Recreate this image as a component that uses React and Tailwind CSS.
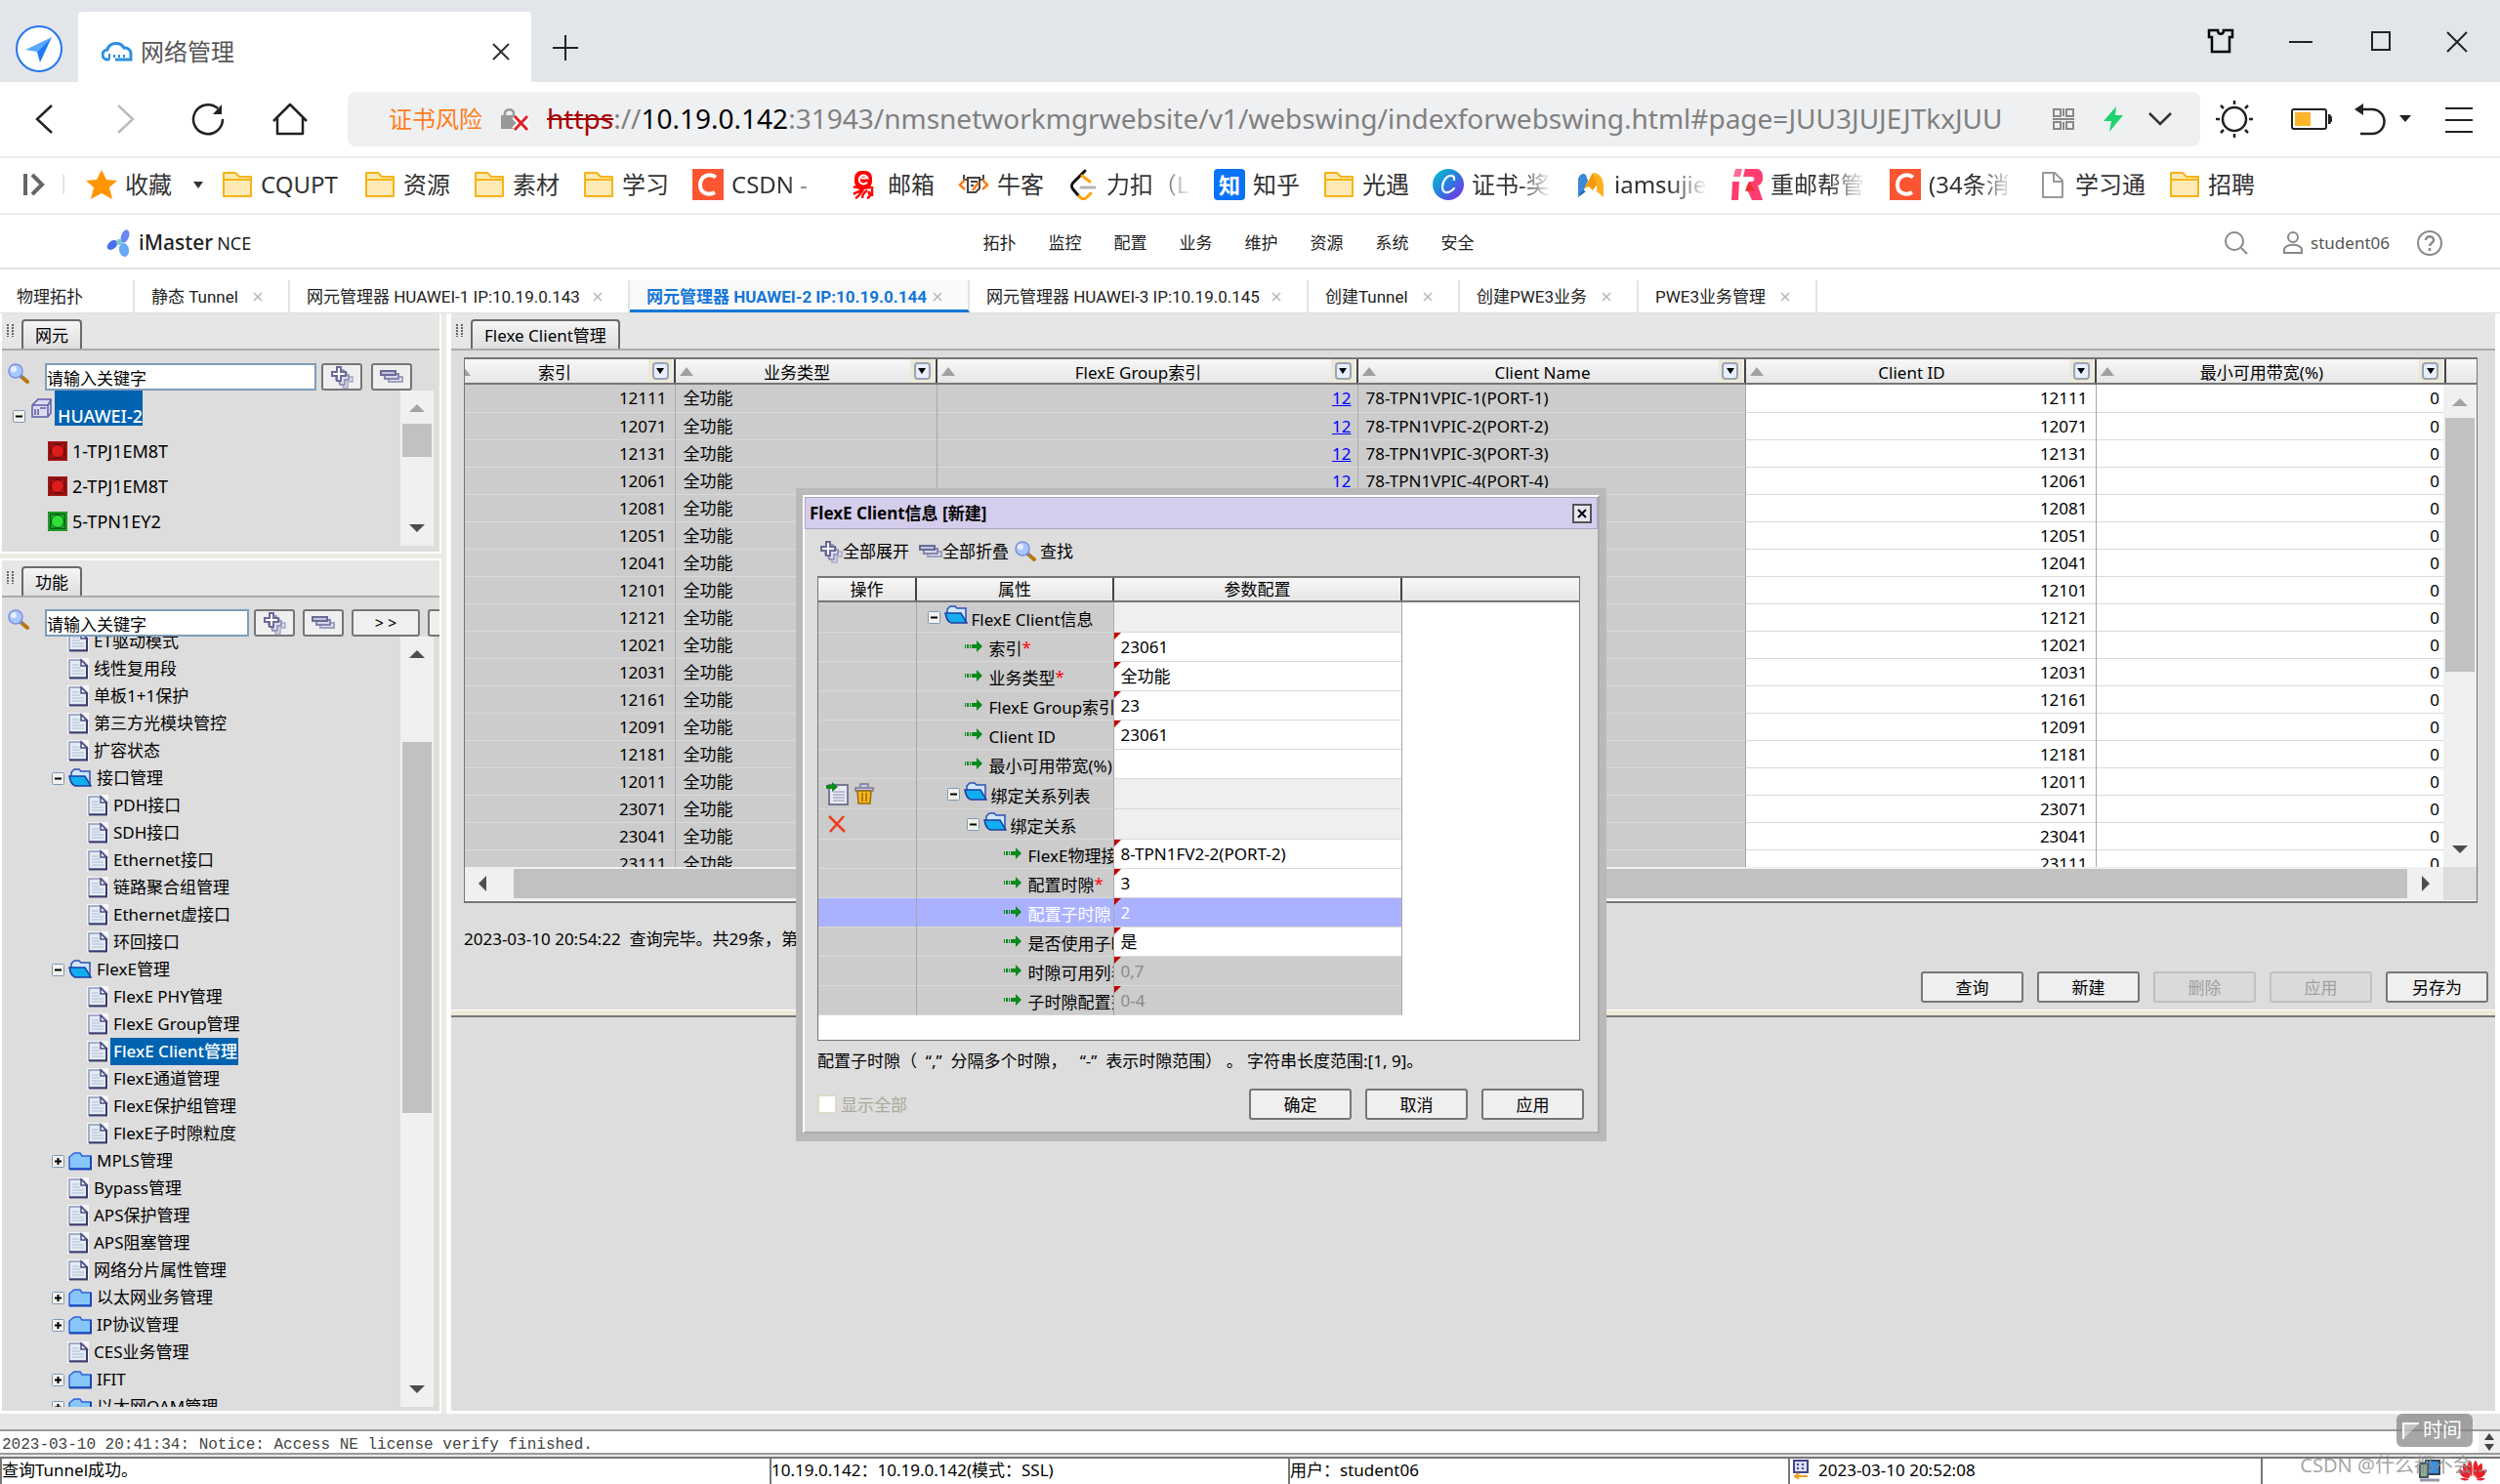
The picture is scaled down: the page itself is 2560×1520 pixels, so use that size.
import React, { useState } from "react";

/* ---------- data ---------- */

const menus = ["拓扑", "监控", "配置", "业务", "维护", "资源", "系统", "安全"];

const pageTabs = [
  { label: "物理拓扑", width: "w-[138px]", closable: false },
  { label: "静态 Tunnel", width: "w-[159px]", closable: true },
  { label: "网元管理器 HUAWEI-1 IP:10.19.0.143", width: "w-[348px]", closable: true },
  { label: "网元管理器 HUAWEI-2 IP:10.19.0.144", width: "w-[348px]", closable: true },
  { label: "网元管理器 HUAWEI-3 IP:10.19.0.145", width: "w-[347px]", closable: true },
  { label: "创建Tunnel", width: "w-[155px]", closable: true },
  { label: "创建PWE3业务", width: "w-[183px]", closable: true },
  { label: "PWE3业务管理", width: "w-[183px]", closable: true },
];

const boards = [
  { name: "1-TPJ1EM8T", color: "#e01b1b", dark: "#6b0f0f" },
  { name: "2-TPJ1EM8T", color: "#e01b1b", dark: "#6b0f0f" },
  { name: "5-TPN1EY2", color: "#2fe03a", dark: "#0d5c14" },
];

const functions = [
  { name: "ET驱动模式", type: "doc", level: 1 },
  { name: "线性复用段", type: "doc", level: 1 },
  { name: "单板1+1保护", type: "doc", level: 1 },
  { name: "第三方光模块管控", type: "doc", level: 1 },
  { name: "扩容状态", type: "doc", level: 1 },
  { name: "接口管理", type: "open" },
  { name: "PDH接口", type: "doc", level: 2 },
  { name: "SDH接口", type: "doc", level: 2 },
  { name: "Ethernet接口", type: "doc", level: 2 },
  { name: "链路聚合组管理", type: "doc", level: 2 },
  { name: "Ethernet虚接口", type: "doc", level: 2 },
  { name: "环回接口", type: "doc", level: 2 },
  { name: "FlexE管理", type: "open" },
  { name: "FlexE PHY管理", type: "doc", level: 2 },
  { name: "FlexE Group管理", type: "doc", level: 2 },
  { name: "FlexE Client管理", type: "doc", level: 2 },
  { name: "FlexE通道管理", type: "doc", level: 2 },
  { name: "FlexE保护组管理", type: "doc", level: 2 },
  { name: "FlexE子时隙粒度", type: "doc", level: 2 },
  { name: "MPLS管理", type: "closed" },
  { name: "Bypass管理", type: "doc", level: 1 },
  { name: "APS保护管理", type: "doc", level: 1 },
  { name: "APS阻塞管理", type: "doc", level: 1 },
  { name: "网络分片属性管理", type: "doc", level: 1 },
  { name: "以太网业务管理", type: "closed" },
  { name: "IP协议管理", type: "closed" },
  { name: "CES业务管理", type: "doc", level: 1 },
  { name: "IFIT", type: "closed" },
  { name: "以太网OAM管理", type: "closed" },
];

const clients = [
  { id: "12111", name: "78-TPN1VPIC-1(PORT-1)" },
  { id: "12071", name: "78-TPN1VPIC-2(PORT-2)" },
  { id: "12131", name: "78-TPN1VPIC-3(PORT-3)" },
  { id: "12061", name: "78-TPN1VPIC-4(PORT-4)" },
  { id: "12081" },
  { id: "12051" },
  { id: "12041" },
  { id: "12101" },
  { id: "12121" },
  { id: "12021" },
  { id: "12031" },
  { id: "12161" },
  { id: "12091" },
  { id: "12181" },
  { id: "12011" },
  { id: "23071" },
  { id: "23041" },
  { id: "23111" },
];

const params = [
  { label: "FlexE Client信息", kind: "group", indent: "pl-[11px]" },
  { label: "索引", kind: "leaf", indent: "pl-12", required: true, value: "23061" },
  { label: "业务类型", kind: "leaf", indent: "pl-12", required: true, value: "全功能" },
  { label: "FlexE Group索引", kind: "leaf", indent: "pl-12", value: "23" },
  { label: "Client ID", kind: "leaf", indent: "pl-12", value: "23061" },
  { label: "最小可用带宽(%)", kind: "leaf", indent: "pl-12" },
  { label: "绑定关系列表", kind: "group", indent: "pl-[31px]", op: "list" },
  { label: "绑定关系", kind: "group", indent: "pl-[51px]", op: "remove" },
  { label: "FlexE物理接口", kind: "leaf", indent: "pl-[88px]", value: "8-TPN1FV2-2(PORT-2)" },
  { label: "配置时隙", kind: "leaf", indent: "pl-[88px]", required: true, value: "3" },
  { label: "配置子时隙", kind: "leaf", indent: "pl-[88px]", value: "2", selected: true },
  { label: "是否使用子时隙", kind: "leaf", indent: "pl-[88px]", value: "是" },
  { label: "时隙可用列表", kind: "leaf", indent: "pl-[88px]", value: "0,7", disabled: true },
  { label: "子时隙配置范围", kind: "leaf", indent: "pl-[88px]", value: "0-4", disabled: true },
];

/* ---------- icons ---------- */

const FolderBookmark = () => (
  <svg width="32" height="32" viewBox="0 0 32 32">
    <path d="M2 4h12l4 4h12v20H2z" fill="#ffeab5" stroke="#f5b416" strokeWidth="2" strokeLinejoin="round" />
    <path d="M2 11h28" stroke="#f5b416" strokeWidth="2" />
  </svg>
);

const CsdnMark = () => (
  <svg width="32" height="32" viewBox="0 0 32 32">
    <rect width="32" height="32" fill="#fc5531" />
    <path d="M24 8.500C18 4 8 6.500 8 16.500c0 9 9 11 15 7.500" fill="none" stroke="#fff" strokeWidth="4" />
  </svg>
);

const MailMark = () => (
  <svg width="32" height="32" viewBox="0 0 32 32">
    <rect x="6" y="2" width="18" height="18" rx="7" fill="#f00" />
    <path d="M19 13.500a4.500 4.500 0 1 1 .5-4h-7" fill="none" stroke="#fff" strokeWidth="2" />
    <path d="M5 19c3-2 5 2 9 1s7 0 9-2M5 26c3-3 7-2 9-5m-7 9c3-1 5-5 8-9m-1 9c0-4 2-6 5-8m0 8c3-1 4-4 1-7m4 5V18" fill="none" stroke="#f00" strokeWidth="2.500" />
  </svg>
);

const NowcoderMark = () => (
  <svg width="32" height="32" viewBox="0 0 32 32" fill="none" strokeWidth="2">
    <path d="M6 6v5h3M26 6v5h-3M10 9h12v11l-4 4h-8z" stroke="#444" />
    <path d="M13 13h7M13 17h3" stroke="#444" />
    <path d="M7 11l-5 5.500L7 21M25 11l5 5.500L25 21M21 14l-6 8" stroke="#ff7a1a" strokeWidth="2.500" />
  </svg>
);

const LeetcodeMark = () => (
  <svg width="32" height="32" viewBox="0 0 32 32" fill="none" strokeLinecap="round" strokeWidth="3">
    <path d="M18 2L6 14c-2 2-2 5 0 7l5 6" stroke="#111" />
    <path d="M12 28c3 4 6 3 8 1l4-4M15 7l8 6" stroke="#ffa116" />
    <path d="M14 19h14" stroke="#b3b3b3" />
  </svg>
);

const ZhihuMark = () => (
  <span className="flex size-8 items-center justify-center rounded bg-[#0a73f5] text-[22px] leading-none font-bold text-white">知</span>
);

const CanvaMark = () => (
  <svg width="32" height="32" viewBox="0 0 32 32">
    <defs>
      <linearGradient id="canva" x1="0" y1="0" x2="1" y2="1">
        <stop offset="0" stopColor="#00c4cc" />
        <stop offset="0.500" stopColor="#2a7de0" />
        <stop offset="1" stopColor="#8b1fe8" />
      </linearGradient>
    </defs>
    <circle cx="16" cy="16" r="16" fill="url(#canva)" />
    <path d="M22 11c1-4-4-6-8-2s-6 13-1 15c4 1 7-2 9-4" fill="none" stroke="#fff" strokeWidth="2.200" strokeLinecap="round" />
  </svg>
);

const MMark = () => (
  <svg width="32" height="32" viewBox="0 0 32 32">
    <path d="M3 29V10c2-5 5-6 8-4l2 6-5 12z" fill="#3b8ad8" />
    <path d="M3 29l5-7 3 1z" fill="#1f5fa8" />
    <path d="M9 20L18 4l5 11-5 7-4-4z" fill="#f59a0c" />
    <path d="M18 4c6 0 10 4 11 12v13l-7-6v-9z" fill="#ffb01f" />
  </svg>
);

const RMark = () => (
  <svg width="32" height="32" viewBox="0 0 32 32">
    <path d="M4 0h7l-2 8H2z" fill="#ff6b95" />
    <path d="M14 0h12c8 0 8 16 1 17l5 15H21l-6-13 3-6h3c3 0 3-5 0-5h-9z" fill="#ff3d6e" />
    <path d="M1 13h7L7 32H0z" fill="#ff3d6e" />
    <path d="M18 13l6 9-10 1z" fill="#e5342e" />
  </svg>
);

const PageMark = () => (
  <svg width="32" height="32" viewBox="0 0 32 32" fill="none" stroke="#999" strokeWidth="2">
    <path d="M7 4h12l8 8v17H7zM18 4v9h9" strokeLinejoin="round" />
  </svg>
);

const bookmarks = [
  { icon: <FolderBookmark />, text: "CQUPT", width: "w-[82px]" },
  { icon: <FolderBookmark />, text: "资源", width: "w-12" },
  { icon: <FolderBookmark />, text: "素材", width: "w-12" },
  { icon: <FolderBookmark />, text: "学习", width: "w-12" },
  { icon: <CsdnMark />, text: "CSDN -", width: "w-24", fade: true },
  { icon: <MailMark />, text: "邮箱", width: "w-12" },
  { icon: <NowcoderMark />, text: "牛客", width: "w-12" },
  { icon: <LeetcodeMark />, text: "力扣（L", width: "w-[86px]", fade: true },
  { icon: <ZhihuMark />, text: "知乎", width: "w-12" },
  { icon: <FolderBookmark />, text: "光遇", width: "w-12" },
  { icon: <CanvaMark />, text: "证书-奖", width: "w-[82px]", fade: true },
  { icon: <MMark />, text: "iamsujie", width: "w-24", fade: true },
  { icon: <RMark />, text: "重邮帮管", width: "w-[98px]", fade: true },
  { icon: <CsdnMark />, text: "(34条消", width: "w-[86px]", fade: true },
  { icon: <PageMark />, text: "学习通", width: "w-[72px]" },
  { icon: <FolderBookmark />, text: "招聘", width: "w-12" },
];

const Magnifier = () => (
  <svg width="22" height="22" viewBox="0 0 22 22" className="shrink-0">
    <path d="M13 13l7 6" stroke="#b9770e" strokeWidth="4" strokeLinecap="round" />
    <path d="M12 12l3 3" stroke="#7a7fa8" strokeWidth="3" />
    <circle cx="8" cy="8" r="7" fill="#a9c8ff" stroke="#7d8fe0" strokeWidth="1.500" />
    <circle cx="6" cy="6" r="3" fill="#fff" opacity="0.700" />
  </svg>
);

const ExpandAll = () => (
  <svg width="24" height="24" viewBox="0 0 24 24" className="shrink-0">
    <path d="M13 8h4v4h6v5h-5v6h-5v-5H9v-5h4z" fill="#dcdcec" stroke="#a9a9c6" strokeWidth="1.500" />
    <path d="M10 5h4v5h5v5h-4v5h-5v-5H6v-5h4z" fill="#dcdcec" stroke="#8585ad" strokeWidth="1.500" />
    <path d="M7 2h4v5h5v4h-5v5H7v-5H2V7h5z" fill="#fff" stroke="#6a6a98" strokeWidth="2" />
  </svg>
);

const CollapseAll = () => (
  <svg width="24" height="24" viewBox="0 0 24 24" className="shrink-0">
    <rect x="9" y="12" width="14" height="5" fill="#e4e4f2" stroke="#a0a0c0" strokeWidth="2" />
    <rect x="5" y="9" width="14" height="5" fill="#d8d8ea" stroke="#8585ad" strokeWidth="2" />
    <rect x="1" y="6" width="15" height="4" fill="#c4c4de" stroke="#6a6a98" strokeWidth="2" />
  </svg>
);

const DocIcon = () => (
  <svg width="22" height="22" viewBox="0 0 22 22" className="shrink-0">
    <rect width="22" height="22" fill="#f7f7fa" />
    <path d="M2 2h13l5 5v13H2z" fill="#e3ebf5" stroke="#8d96b8" strokeWidth="1.500" />
    <path d="M20 7v13.500H2" fill="none" stroke="#39396b" strokeWidth="2" />
    <path d="M14 2v6h6z" fill="#fff" stroke="#4b4b80" strokeWidth="1.500" />
    <path d="M5 7h7M5 10h8M5 13h12M5 16h12" stroke="#b0bccf" />
  </svg>
);

const FolderOpen = () => (
  <svg width="24" height="20" viewBox="0 0 24 20" className="shrink-0">
    <path d="M3 8V4l3-3h5l2 2h9v14H6z" fill="#cfe6fb" stroke="#2b4fb5" strokeWidth="1.500" />
    <path d="M1 8h16l6 10H7C3 17 2 13 1 8z" fill="#12aef0" stroke="#1c3fa0" strokeWidth="1.500" />
  </svg>
);

const FolderClosed = () => (
  <svg width="24" height="20" viewBox="0 0 24 20" className="shrink-0">
    <path d="M1 6l5-4h6l2 3h9v13H1z" fill="#86c6f8" stroke="#2c62d8" strokeWidth="1.500" />
    <path d="M23 5v13.500H1" fill="none" stroke="#1c46b8" strokeWidth="2" />
  </svg>
);

const Toggle = ({ open }) => (
  <svg width="13" height="13" viewBox="0 0 13 13" className="shrink-0">
    <rect x="0.500" y="0.500" width="12" height="12" rx="1" fill="#f3f1e9" stroke="#7c98b8" />
    <path d={open ? "M3 6.500h7" : "M3 6.500h7M6.500 3v7"} stroke="#000" strokeWidth="2" />
  </svg>
);

const Board = ({ color, dark }) => (
  <svg width="20" height="20" viewBox="0 0 20 20" className="shrink-0">
    <rect x="1" y="1" width="18" height="18" fill={dark} stroke={dark} strokeWidth="2" />
    <path d="M3 3h5L3 8zM17 3v5l-5-5zM17 17h-5l5-5zM3 17v-5l5 5z" fill={color} opacity="0.500" />
    <path d="M1 1h18v18H1z" fill="none" stroke={color} strokeWidth="1" />
    <circle cx="10" cy="10" r="6" fill={color} />
  </svg>
);

const GreenArrow = () => (
  <svg width="20" height="14" viewBox="0 0 20 14" className="shrink-0" fill="#0a8a1c">
    <path d="M1 5h1v4H1zM3 5h2v4H3zM6 5h1v4H6zM8 5h5V1l6 6-6 6V9H8z" />
  </svg>
);

const Huawei = () => (
  <svg width="32" height="24" viewBox="0 0 32 26" fill="#e8202a">
    <path d="M15 20C9 13 9 6 13 2c3 3 3 11 2 18zM17 20c6-7 6-14 2-18-3 3-3 11-2 18zM13 21C5 17 4 10 6 5c5 3 8 9 7 16zM19 21c8-4 9-11 7-16-5 3-8 9-7 16zM12 22C5 22 1 18 1 12c5 1 10 5 11 10zM20 22c7 0 11-4 11-10-5 1-10 5-11 10zM12 23c-3 2-7 2-10-1 4-1 8 0 10 1zM20 23c3 2 7 2 10-1-4-1-8 0-10 1z" />
  </svg>
);

const Triangle = ({ dir, color = "#4d4d4d" }) => {
  const d = { up: "M0 12L8 4l8 8z", down: "M0 4l8 8 8-8z", left: "M12 0L4 8l8 8z", right: "M4 0l8 8-8 8z" }[dir];
  return (
    <svg width="16" height="16" viewBox="0 0 16 16" className="shrink-0" fill={color}>
      <path d={d} />
    </svg>
  );
};

/* ---------- small parts ---------- */

const SwingButton = ({ children, disabled }) => (
  <button
    disabled={disabled}
    className="h-8 w-[105px] rounded-[3px] border-2 border-[#767676] bg-[#efefef] text-[17px] leading-none disabled:border-[#c0c0c0] disabled:bg-[#dadada] disabled:text-[#a0a0a0]"
  >
    {children}
  </button>
);

const IconButton = ({ children, label }) => (
  <button
    aria-label={label}
    className="flex h-7 w-[42px] shrink-0 items-center justify-center rounded-[3px] border-2 border-[#767676] bg-[#efefef]"
  >
    {children}
  </button>
);

const PanelHeader = ({ title }) => (
  <div className="flex h-[38px] items-end border-b-2 border-[#ababab] bg-[#e6e6e6] pl-[5px]">
    <svg width="7" height="13" viewBox="0 0 7 13" className="mr-2 mb-3">
      <path d="M1 0v13M6 0v13" stroke="#666" strokeWidth="2" strokeDasharray="2 1" />
    </svg>
    <h2 className="flex h-[30px] items-center rounded-t-[4px] border-x-2 border-t-2 border-[#6a6a6a] bg-linear-to-b from-[#f5f5f5] to-[#dedede] px-3 pt-0.5 text-[17px]">
      {title}
    </h2>
  </div>
);

const KeywordInput = ({ id }) => (
  <>
    <label htmlFor={id} className="mr-4">
      <Magnifier />
    </label>
    <input
      id={id}
      defaultValue="请输入关键字"
      className="h-7 min-w-0 flex-1 border-2 border-[#7f9db9] bg-white text-[17px] leading-none outline-none"
    />
  </>
);

const TreeRow = ({ item, selected, onSelect }) => {
  if (item.type !== "doc") {
    return (
      <li className="flex h-7 items-center gap-1 pl-[51px]">
        <Toggle open={item.type === "open"} />
        {item.type === "open" ? <FolderOpen /> : <FolderClosed />}
        <span className="pl-px">{item.name}</span>
      </li>
    );
  }
  return (
    <li className={`flex h-7 items-center ${item.level === 1 ? "pl-[67px]" : "pl-[87px]"}`}>
      <DocIcon />
      <button
        onClick={onSelect}
        className={`ml-0.5 h-7 pr-px pl-[3px] ${selected ? "bg-[#0063b1] font-medium text-white" : ""}`}
      >
        {item.name}
      </button>
    </li>
  );
};

/* ---------- browser chrome ---------- */

const BrowserTabs = () => (
  <div className="flex h-[84px] items-end bg-[#e2e5ea]">
    <svg width="48" height="48" viewBox="0 0 48 48" className="mx-4 mb-[10px]">
      <circle cx="24" cy="24" r="23" fill="#fff" stroke="#2277f0" strokeWidth="2" />
      <path d="M37 12L10 25l12 2z" fill="#5aa9ff" />
      <path d="M37 12L22 27l3 11z" fill="#1f7cf5" />
    </svg>
    <div className="flex h-[72px] w-[464px] items-center rounded-t bg-white pt-2.5 pr-[22px] pl-6">
      <svg width="32" height="22" viewBox="0 0 32 22" fill="none" stroke="#2b8fe0" strokeWidth="3">
        <path d="M8 19H6a5 5 0 0 1 0-10 9 8 0 0 1 17-2 6 6 0 0 1 7 6v6H14" />
        <path d="M8 19v-6M13 17v-3M18 17v-3M23 17v-3" strokeWidth="2" />
      </svg>
      <span className="flex-1 pl-2 text-[24px] text-[#555]">网络管理</span>
      <button aria-label="关闭标签页">
        <svg width="18" height="18" viewBox="0 0 18 18" stroke="#333" strokeWidth="2">
          <path d="M1 1l16 16M17 1L1 17" />
        </svg>
      </button>
    </div>
    <button aria-label="新建标签页" className="mb-[22px] ml-[22px]">
      <svg width="26" height="26" viewBox="0 0 26 26" stroke="#222" strokeWidth="2">
        <path d="M13 0v26M0 13h26" />
      </svg>
    </button>
    <div className="ml-auto flex h-[84px] pr-1.5">
      <button aria-label="皮肤" className="flex w-20 justify-center pt-[29px]">
        <svg width="28" height="26" viewBox="0 0 28 26" fill="none" stroke="#000" strokeWidth="2.500" className="h-[26px]">
          <path d="M2 2h9c0 5 6 5 6 0h9v7h-3v15H5V9H2z" />
        </svg>
      </button>
      <button aria-label="最小化" className="flex w-[84px] justify-center pt-[42px]">
        <span className="h-0.5 w-6 bg-[#222]" />
      </button>
      <button aria-label="最大化" className="flex w-20 justify-center pt-8">
        <span className="size-5 border-2 border-[#222]" />
      </button>
      <button aria-label="关闭" className="flex w-[76px] justify-center pt-8">
        <svg width="22" height="22" viewBox="0 0 22 22" stroke="#222" strokeWidth="2">
          <path d="M1 1l20 20M21 1L1 21" />
        </svg>
      </button>
    </div>
  </div>
);

const AddressRow = () => (
  <div className="flex h-[78px] items-center border-b-2 border-[#eee] bg-white pl-[3px]">
    <button aria-label="后退" className="flex w-[84px] justify-center">
      <svg width="18" height="30" viewBox="0 0 18 30" fill="none" stroke="#222" strokeWidth="2.500">
        <path d="M17 1L2 15l15 14" />
      </svg>
    </button>
    <button aria-label="前进" className="flex w-[84px] justify-center">
      <svg width="18" height="30" viewBox="0 0 18 30" fill="none" stroke="#bbb" strokeWidth="2.500">
        <path d="M1 1l15 14L1 29" />
      </svg>
    </button>
    <button aria-label="刷新" className="flex w-[84px] justify-center">
      <svg width="34" height="34" viewBox="0 0 34 34" fill="none" stroke="#222" strokeWidth="2.500">
        <path d="M32 17A15 15 0 1 1 27 6" />
        <path d="M31 2v10H22z" fill="#222" stroke="none" />
      </svg>
    </button>
    <button aria-label="主页" className="flex w-[84px] justify-center">
      <svg width="38" height="34" viewBox="0 0 38 34" fill="none" stroke="#222" strokeWidth="2.500" strokeLinejoin="round">
        <path d="M2 19L19 2l17 17M6 16v16h26V16" />
      </svg>
    </button>
    <div className="ml-[17px] flex h-14 min-w-0 flex-1 items-center rounded-lg bg-[#eff0f2] pr-[29px] pl-[42px]">
      <span className="text-[24px] whitespace-nowrap text-[#ff7d1a]">证书风险</span>
      <svg width="30" height="26" viewBox="0 0 30 26" className="mr-[18px] ml-[18px] shrink-0">
        <path d="M5 10V6a5 5 0 0 1 9 0v4" fill="none" stroke="#999" strokeWidth="2.500" />
        <rect x="1" y="9" width="17" height="14" fill="#999" />
        <path d="M15 10l13 14M28 10L15 24" stroke="#fff" strokeWidth="7" />
        <path d="M15 10l13 14M28 10L15 24" stroke="#e02424" strokeWidth="3" />
      </svg>
      <div className="min-w-0 flex-1 overflow-hidden pb-0.5 text-[28px] whitespace-nowrap text-[#808080]">
        <span className="text-[#a80000] line-through">https</span>://<span className="text-black">10.19.0.142</span>
        :31943/nmsnetworkmgrwebsite/v1/webswing/indexforwebswing.html#page=JUU3JUJEJTkxJUU
      </div>
      <svg width="22" height="22" viewBox="0 0 22 22" fill="none" stroke="#888" strokeWidth="2" className="ml-8 shrink-0">
        <path d="M1 1h7v7H1zM14 1h7v7h-7zM1 14h7v7H1zM14 14h7v7h-7zM0 11h22M11 0v8M11 14v8" />
      </svg>
      <svg width="20" height="26" viewBox="0 0 20 26" fill="#1fd36f" className="ml-[30px] shrink-0">
        <path d="M13 0L0 15h8L6 26 20 9h-8z" />
      </svg>
      <svg width="24" height="14" viewBox="0 0 24 14" fill="none" stroke="#333" strokeWidth="2.500" className="ml-[26px] shrink-0">
        <path d="M1 1l11 11L23 1" />
      </svg>
    </div>
    <button aria-label="亮度" className="flex w-[70px] justify-center">
      <svg width="38" height="38" viewBox="0 0 38 38" fill="none" stroke="#222" strokeWidth="2.500">
        <circle cx="19" cy="19" r="12" />
        <path d="M19 0v4M19 34v4M0 19h4M34 19h4M5 5l3 3M30 30l3 3M5 33l3-3M30 8l3-3" />
      </svg>
    </button>
    <button aria-label="省电" className="flex w-[88px] justify-center">
      <svg width="42" height="24" viewBox="0 0 42 24">
        <rect x="1" y="2" width="35" height="20" rx="2" fill="#fff" stroke="#222" strokeWidth="2" />
        <rect x="4" y="5" width="16" height="14" fill="#fdb52c" />
        <path d="M38 7h2l2 3v4l-2 3h-2z" fill="#222" />
      </svg>
    </button>
    <button aria-label="恢复" className="flex w-[65px] items-center gap-3">
      <svg width="34" height="34" viewBox="0 0 34 34" fill="none" stroke="#222" strokeWidth="2.500">
        <path d="M6 7h12a12 12 0 0 1 0 25H6" />
        <path d="M0 7l9-6v12z" fill="#222" stroke="none" />
      </svg>
      <svg width="12" height="8" viewBox="0 0 12 8" fill="#222">
        <path d="M0 0h12L6 7z" />
      </svg>
    </button>
    <button aria-label="菜单" className="flex w-[84px] flex-col items-center gap-2.5 pt-0.5">
      <span className="h-0.5 w-7 bg-[#222]" />
      <span className="h-0.5 w-7 bg-[#222]" />
      <span className="h-0.5 w-7 bg-[#222]" />
    </button>
  </div>
);

const BookmarkRow = () => (
  <div className="flex h-[58px] items-center overflow-hidden border-b-2 border-[#eee] bg-white pb-0.5 pl-6 text-[24px] text-[#333]">
    <svg width="42" height="24" viewBox="0 0 42 24" fill="none" stroke="#666" strokeWidth="4" className="shrink-0">
      <path d="M2 1v22M9 2l10 10L9 22" />
      <path d="M41 2v20" stroke="#ccc" strokeWidth="1" />
    </svg>
    <svg width="32" height="32" viewBox="0 0 32 32" fill="#ff9500" className="ml-[22px] shrink-0">
      <path d="M16 1l5 10 11 1-8 7 3 12-11-6-11 6 3-12-8-7 11-1z" />
    </svg>
    <span className="ml-2 shrink-0">收藏</span>
    <svg width="10" height="7" viewBox="0 0 10 7" fill="#333" className="mr-[19px] ml-[22px] shrink-0">
      <path d="M0 0h10L5 7z" />
    </svg>
    <ul className="flex gap-6">
      {bookmarks.map((b, i) => (
        <li key={i}>
          <a href="#bookmark" className="flex items-center gap-2">
            <span className="shrink-0">{b.icon}</span>
            <span className={`whitespace-nowrap ${b.width} ${b.fade ? "mask-r-from-60%" : ""}`}>{b.text}</span>
          </a>
        </li>
      ))}
    </ul>
  </div>
);

/* ---------- iMaster NCE ---------- */

const AppHeader = () => (
  <header className="grid h-14 grid-cols-[1fr_auto_1fr] items-center border-b-2 border-[#e3e3e3] bg-white pt-[3px]">
    <div className="flex items-center pl-[109px] text-[#222]">
      <svg width="25" height="28" viewBox="0 0 25 28">
        <ellipse cx="19" cy="7" rx="4" ry="7" fill="#6b86f5" transform="rotate(20 19 7)" />
        <ellipse cx="6" cy="16" rx="4" ry="6" fill="#4a6ef0" transform="rotate(50 6 16)" />
        <ellipse cx="18" cy="21" rx="5" ry="7" fill="#67a9f7" transform="rotate(-10 18 21)" />
        <circle cx="13" cy="13" r="3" fill="#7cc6c9" />
      </svg>
      <span className="pl-2 text-[21px] font-medium">iMaster</span>
      <span className="pt-0.5 pl-1 text-[18px]">NCE</span>
    </div>
    <nav className="mr-11 flex gap-[33px] text-[17px] text-[#222]">
      {menus.map((m) => (
        <a key={m} href={`#${m}`}>
          {m}
        </a>
      ))}
    </nav>
    <div className="flex items-center justify-end pr-[59px] text-[17px] text-[#555]">
      <svg width="24" height="24" viewBox="0 0 24 24" fill="none" stroke="#888" strokeWidth="2">
        <circle cx="10" cy="10" r="9" />
        <path d="M17 17l6 6" />
      </svg>
      <svg width="20" height="24" viewBox="0 0 20 24" fill="none" stroke="#888" strokeWidth="2" className="mr-2 ml-9">
        <circle cx="10" cy="6" r="5" />
        <path d="M1 22v-3c0-7 18-7 18 0v3z" />
      </svg>
      <span>student06</span>
      <button aria-label="帮助" className="ml-7">
        <svg width="26" height="26" viewBox="0 0 26 26" fill="none" stroke="#888" strokeWidth="2">
          <circle cx="13" cy="13" r="12" />
          <path d="M9 10c0-5 8-5 8 0 0 3-4 3-4 6M13 18v3" strokeWidth="2.500" />
        </svg>
      </button>
    </div>
  </header>
);

const PageTabs = () => {
  const [active, setActive] = useState(3);
  return (
    <div className="flex h-[45px] items-end border-b border-[#e0e0e0] bg-white font-['Roboto','Noto_Sans_CJK_SC',sans-serif]">
      {pageTabs.map((t, i) => (
        <div
          key={t.label}
          className={`flex h-[33px] shrink-0 items-center justify-between border-r-2 border-[#e3e3e3] pr-[26px] pl-[17px] ${t.width} ${
            i === active ? "border-b-[3px] border-b-[#1476d8] bg-[#fafafa] pt-1" : "pt-px"
          }`}
        >
          <button
            onClick={() => setActive(i)}
            className={`text-[17px] leading-none whitespace-nowrap ${i === active ? "font-bold text-[#1476d8]" : "text-[#222]"}`}
          >
            {t.label}
          </button>
          {t.closable && (
            <button aria-label={`关闭 ${t.label}`}>
              <svg width="10" height="10" viewBox="0 0 10 10" stroke="#b5b5b5" strokeWidth="1.500">
                <path d="M1 1l8 8M9 1L1 9" />
              </svg>
            </button>
          )}
        </div>
      ))}
    </div>
  );
};

const DevicePanel = () => (
  <section className="flex h-[246px] flex-col border-r-2 border-b-2 border-l-2 border-white bg-[#ddd]">
    <PanelHeader title="网元" />
    <div className="flex items-start pt-[13px] pr-7 pl-1.5">
      <KeywordInput id="device-search" />
      <div className="flex gap-[9px] pl-[5px]">
        <IconButton label="全部展开"><ExpandAll /></IconButton>
        <IconButton label="全部折叠"><CollapseAll /></IconButton>
      </div>
    </div>
    <div className="flex min-h-0 flex-1 pr-1.5 pb-1.5">
      <ul className="min-w-0 flex-1 overflow-hidden text-[18px]">
        <li className="flex h-9 items-center pl-[11px]">
          <span className="pt-4"><Toggle open /></span>
          <svg width="21" height="20" viewBox="0 0 21 20" className="mr-[3px] ml-1.5">
            <path d="M1 7l6-6h13v14l-3 4H1z" fill="#dcdcf0" stroke="#5b5ba6" strokeWidth="1.500" />
            <path d="M1 7h16v12M17 7l3-5M4 11v6M7 11v6M9 10h6" fill="none" stroke="#5b5ba6" strokeWidth="1.500" />
          </svg>
          <button className="h-9 bg-[#0063b1] pt-4 pl-[3px] text-[18px] leading-none font-medium text-white">HUAWEI-2</button>
        </li>
        {boards.map((b) => (
          <li key={b.name} className="flex h-9 items-center gap-[5px] pt-4 pl-[47px] leading-none">
            <Board color={b.color} dark={b.dark} />
            {b.name}
          </li>
        ))}
      </ul>
      <div className="flex w-[34px] flex-col items-center bg-[#f0f0f0] py-2.5">
        <Triangle dir="up" color="#a3a3a3" />
        <div className="mt-2 h-[34px] w-[30px] bg-[#c1c1c1]" />
        <div className="flex-1" />
        <Triangle dir="down" />
      </div>
    </div>
  </section>
);

const FunctionPanel = () => {
  const [current, setCurrent] = useState("FlexE Client管理");
  return (
    <section className="flex min-h-0 flex-1 flex-col border-2 border-b-[3px] border-white bg-[#ddd]">
      <PanelHeader title="功能" />
      <div className="flex items-start overflow-hidden pt-3 pl-1.5">
        <KeywordInput id="function-search" />
        <div className="flex gap-2 pl-[5px]">
          <IconButton label="全部展开"><ExpandAll /></IconButton>
          <IconButton label="全部折叠"><CollapseAll /></IconButton>
          <button className="h-7 w-[70px] rounded-[3px] border-2 border-[#767676] bg-[#efefef] text-[16px] leading-none">
            &gt; &gt;
          </button>
          <span className="h-7 w-3 rounded-l-[3px] border-2 border-r-0 border-[#767676] bg-[#efefef]" />
        </div>
      </div>
      <div className="flex min-h-0 flex-1 pr-1.5 pb-1">
        <ul className="-mt-[9px] min-w-0 flex-1 [clip-path:inset(9px_0_0_0)] overflow-hidden text-[17px] whitespace-nowrap">
          {functions.map((f) => (
            <TreeRow key={f.name} item={f} selected={f.name === current} onSelect={() => setCurrent(f.name)} />
          ))}
        </ul>
        <div className="flex w-[34px] flex-col items-center bg-[#f0f0f0] py-2.5">
          <Triangle dir="up" />
          <div className="mt-[82px] h-[380px] w-[30px] bg-[#c1c1c1]" />
          <div className="flex-1" />
          <Triangle dir="down" />
        </div>
      </div>
    </section>
  );
};

const clientColumns = ["索引", "业务类型", "FlexE Group索引", "Client Name", "Client ID", "最小可用带宽(%)"];

const ClientCols = () => (
  <colgroup>
    <col className="w-[215px]" />
    <col className="w-[268px]" />
    <col className="w-[431px]" />
    <col className="w-[397px]" />
    <col className="w-[359px]" />
    <col />
  </colgroup>
);

const ClientTable = () => (
  <div className="flex h-[559px] flex-col border border-t-2 border-b-2 border-[#767676] bg-white">
    <div className="flex h-[26px] shrink-0 border-b-2 border-[#767676] bg-linear-to-b from-[#f7f7f7] to-[#e6e6e6]">
      <table className="h-6 w-full table-fixed border-collapse text-[17px]">
        <ClientCols />
        <thead>
          <tr>
            {clientColumns.map((c, i) => (
              <th key={c} scope="col" className="overflow-hidden border-r-2 border-[#444] p-0 font-normal">
                <div className="flex h-6 items-center justify-between pr-0.5">
                  <svg width="14" height="9" viewBox="0 0 14 9" fill="#a0a0a0" className={i === 0 ? "-ml-2" : "ml-1"}>
                    <path d="M7 0l7 9H0z" />
                  </svg>
                  <span className="mr-2.5 pt-0.5 leading-none">{c}</span>
                  <button aria-label={`筛选 ${c}`} className="flex h-6 w-6 items-center justify-center bg-[#ece9d8]">
                    <span className="flex h-[18px] w-[17px] items-center justify-center rounded-[4px] border-2 border-[#9aa3b5] bg-[#e8eefc]">
                      <svg width="8" height="6" viewBox="0 0 8 6">
                        <path d="M0 0h8L4 6z" />
                      </svg>
                    </span>
                  </button>
                </div>
              </th>
            ))}
          </tr>
        </thead>
      </table>
      <div className="w-[31px] shrink-0" />
    </div>
    <div className="flex min-h-0 flex-1">
      <div className="min-w-0 flex-1 overflow-hidden">
        <table className="w-full table-fixed border-collapse text-[17px]">
          <ClientCols />
          <tbody>
            {clients.map((c) => (
              <tr key={c.id} className="h-7 border-b border-[#d9d9d9] leading-none">
                <td className="border-r border-[#a8a8a8] bg-[#ccc] p-0 pr-2 text-right">{c.id}</td>
                <td className="border-r border-[#a8a8a8] bg-[#ccc] p-0 pl-2">全功能</td>
                <td className="border-r border-[#a8a8a8] bg-[#ccc] p-0 pr-1.5 text-right">
                  {c.name && (
                    <a href="#group" className="text-[#00f] underline">
                      12
                    </a>
                  )}
                </td>
                <td className="border-r border-[#a8a8a8] bg-[#ccc] p-0 pl-2">{c.name}</td>
                <td className="border-r border-[#a8a8a8] bg-white p-0 pr-2 text-right">{c.id}</td>
                <td className="bg-white p-0 pr-1 text-right">0</td>
              </tr>
            ))}
          </tbody>
        </table>
      </div>
      <div className="flex w-[34px] shrink-0 flex-col items-center bg-[#f0f0f0] py-2.5">
        <Triangle dir="up" color="#a3a3a3" />
        <div className="mt-2 h-[260px] w-[30px] bg-[#c1c1c1]" />
        <div className="flex-1" />
        <Triangle dir="down" />
      </div>
    </div>
    <div className="mb-px flex h-[34px] shrink-0 items-center bg-[#f0f0f0]">
      <div className="flex w-[50px] pl-2.5">
        <Triangle dir="left" />
      </div>
      <div className="h-[30px] flex-1 bg-[#c1c1c1]" />
      <div className="flex w-[37px] justify-center">
        <Triangle dir="right" />
      </div>
      <div className="h-[34px] w-[34px] bg-[#ddd]" />
    </div>
  </div>
);

const OpIcons = ({ op }) => {
  if (op === "list") {
    return (
      <div className="flex gap-1.5 pl-2">
        <svg width="23" height="24" viewBox="0 0 23 24">
          <path d="M3 3h19v20H3z" fill="#e8eaf4" stroke="#55587a" strokeWidth="1.500" />
          <path d="M7 10h12M7 13h12M7 16h12M7 19h12" stroke="#8c8fa8" />
          <path d="M0 3h6V0l6 5-6 5V7H0z" fill="#0a8a1c" />
        </svg>
        <svg width="20" height="24" viewBox="0 0 20 24">
          <path d="M6 5V2h8v3M1 6h18v3H1z" fill="#c9c9dc" stroke="#77779a" strokeWidth="1.500" />
          <path d="M3 9h14l-1 13H4z" fill="#f4b81c" stroke="#9c6a08" strokeWidth="1.500" />
          <path d="M8 11v9M12 11v9" stroke="#9c6a08" strokeWidth="1.500" />
        </svg>
      </div>
    );
  }
  if (op === "remove") {
    return (
      <svg width="18" height="18" viewBox="0 0 18 18" stroke="#f03a1a" strokeWidth="2.500" className="ml-2.5">
        <path d="M1 1l16 16M16 1L2 17" />
      </svg>
    );
  }
  return null;
};

const ParamRow = ({ p }) => {
  const group = p.kind === "group";
  const height = group ? "h-[30px]" : "h-[29px]";
  let side = "bg-[#ccc]";
  let value = "bg-white";
  if (group) value = "bg-[#efefef]";
  if (p.disabled) value = "bg-[#ccc] text-[#8a8a8a]";
  if (p.selected) {
    side = "bg-[#aab2ff] text-white";
    value = "bg-[#aab2ff] text-white";
  }
  return (
    <tr className="border-b border-[#d9d9d9]">
      <td className={`border-r border-[#a8a8a8] p-0 ${side}`}>
        <OpIcons op={p.op} />
      </td>
      <td className={`border-r border-[#a8a8a8] p-0 ${side}`}>
        <div className={`flex items-center overflow-hidden leading-none whitespace-nowrap ${height} ${p.indent}`}>
          {group ? (
            <>
              <Toggle open />
              <span className="mx-1 pb-1"><FolderOpen /></span>
            </>
          ) : (
            <span className="mr-1.5 pb-0.5"><GreenArrow /></span>
          )}
          <span className="pt-1">{p.label}</span>
          {p.required && <span className="text-[#f00]">*</span>}
        </div>
      </td>
      <td className={`border-r border-[#a8a8a8] p-0 ${value}`}>
        <div className={`flex items-start leading-none ${height}`}>
          {p.value ? (
            <svg width="7" height="7" viewBox="0 0 7 7" fill="#c00000">
              <path d="M0 0h7L0 7z" />
            </svg>
          ) : null}
          <span className="pt-1.5">{p.value}</span>
        </div>
      </td>
    </tr>
  );
};

const ParamCols = () => (
  <colgroup>
    <col className="w-[100px]" />
    <col className="w-[202px]" />
    <col className="w-[295px]" />
  </colgroup>
);

const ClientDialog = () => (
  <div role="dialog" aria-label="FlexE Client信息" className="absolute top-[179px] left-[353px] w-[830px] border-[7px] border-b-8 border-[#b9b9b9] text-[17px]">
    <div className="border-2 border-white border-r-[#aaa] border-b-[#aaa] bg-[#ddd] pb-3">
      <div className="flex h-[33px] items-center justify-between border border-[#aba6c6] bg-[#d4cdec] pr-[5px] pl-1">
        <h3 className="text-[17px] leading-none font-bold">FlexE Client信息 [新建]</h3>
        <button aria-label="关闭窗口" className="flex size-5 items-center justify-center border-2 border-[#555] bg-[#e8e4f4]">
          <svg width="10" height="10" viewBox="0 0 10 10" stroke="#000" strokeWidth="2">
            <path d="M1 1l8 8M9 1L1 9" />
          </svg>
        </button>
      </div>
      <div className="flex h-12 items-center pb-[3px] pl-[15px] leading-none">
        <button className="flex items-center"><ExpandAll />全部展开</button>
        <button className="ml-2.5 flex items-center"><CollapseAll />全部折叠</button>
        <button className="ml-1.5 flex items-center gap-1"><Magnifier />查找</button>
      </div>
      <div className="mr-[18px] ml-[13px] h-[476px] border border-t-2 border-[#767676] bg-white">
        <div className="h-[25px] border-b-2 border-[#767676] bg-linear-to-b from-[#f7f7f7] to-[#e6e6e6]">
          <table className="h-[23px] w-[597px] table-fixed border-collapse leading-none">
            <ParamCols />
            <thead>
              <tr>
                <th scope="col" className="border-r-2 border-[#444] p-0 font-normal">操作</th>
                <th scope="col" className="border-r-2 border-[#444] p-0 font-normal">属性</th>
                <th scope="col" className="border-r-2 border-[#444] p-0 font-normal">参数配置</th>
              </tr>
            </thead>
          </table>
        </div>
        <table className="w-[597px] table-fixed border-collapse">
          <ParamCols />
          <tbody>
            {params.map((p) => (
              <ParamRow key={p.label} p={p} />
            ))}
          </tbody>
        </table>
      </div>
      <p className="pt-3 pl-[13px] leading-[18px]">
        配置子时隙（&nbsp; “,” &nbsp;分隔多个时隙，&nbsp;&nbsp; “-” &nbsp;表示时隙范围）&nbsp;。&nbsp;字符串长度范围:[1, 9]。
      </p>
      <div className="mt-[19px] flex items-center pr-[14px] pl-[13px]">
        <input id="show-all" type="checkbox" disabled className="size-5 appearance-none border-2 border-[#dcdac8] bg-white" />
        <label htmlFor="show-all" className="pl-1 leading-none text-[#aca899]">
          显示全部
        </label>
        <div className="ml-auto flex gap-3.5">
          <SwingButton>确定</SwingButton>
          <SwingButton>取消</SwingButton>
          <SwingButton>应用</SwingButton>
        </div>
      </div>
    </div>
  </div>
);

const ClientPanel = () => (
  <main className="relative mr-[3px] flex min-w-0 flex-1 flex-col border-r-2 border-l border-white bg-[#ddd]">
    <PanelHeader title="Flexe Client管理" />
    <div className="flex h-[675px] shrink-0 flex-col pr-[7px] pl-[13px]">
      <div className="pt-[7px] pr-[11px]">
        <ClientTable />
      </div>
      <p className="pt-[27px] text-[17px] leading-5">2023-03-10 20:54:22&nbsp; 查询完毕。共29条，第1条被选中。</p>
      <div className="mt-[23px] flex justify-end gap-3.5">
        <SwingButton>查询</SwingButton>
        <SwingButton>新建</SwingButton>
        <SwingButton disabled>删除</SwingButton>
        <SwingButton disabled>应用</SwingButton>
        <SwingButton>另存为</SwingButton>
      </div>
    </div>
    <div className="h-2 shrink-0 border-t border-b-2 border-t-white border-b-[#767676] bg-[#ece9d8]" />
    <div className="flex-1 border-b-[3px] border-white" />
    <ClientDialog />
  </main>
);

const StatusBar = () => (
  <footer className="relative shrink-0 bg-[#e6e6e6] pt-4">
    <div className="flex h-[26px] items-center justify-between border-t-2 border-b-2 border-[#9a9a9a] bg-white pl-0.5">
      <span className="pt-1.5 font-['Liberation_Mono',monospace] text-[16px] leading-none text-[#444]">
        2023-03-10 20:41:34: Notice: Access NE license verify finished.
      </span>
      <span className="flex h-[22px] w-[22px] flex-col items-center justify-center bg-[#f0f0f0]">
        <svg width="10" height="18" viewBox="0 0 10 18" fill="#444">
          <path d="M5 0l5 7H0zM5 18l5-7H0z" />
        </svg>
      </span>
    </div>
    <div className="mt-0.5 flex h-7 bg-white text-[17px] leading-none">
      <div className="flex w-[788px] items-center border-t-2 border-l-2 border-[#767676] pb-1">查询Tunnel成功。</div>
      <div className="flex w-[531px] items-center border-t-2 border-l-2 border-[#767676] pb-1">10.19.0.142：10.19.0.142(模式：SSL)</div>
      <div className="flex w-[512px] items-center border-t-2 border-l-2 border-[#767676] pb-1">用户：student06</div>
      <div className="flex w-[484px] items-center gap-2.5 border-t-2 border-l-2 border-[#767676] pb-1 pl-[3px]">
        <svg width="16" height="20" viewBox="0 0 16 20">
          <rect x="1" y="1" width="14" height="12" fill="#dcdcf5" stroke="#44448f" strokeWidth="2" />
          <path d="M5 4v2M5 8v2M10 4v2M10 8v2" stroke="#44448f" strokeWidth="2" />
          <path d="M15 17H3M6 14l-4 3 4 3" fill="none" stroke="#f0a020" strokeWidth="2" />
        </svg>
        2023-03-10 20:52:08
      </div>
      <div className="flex flex-1 items-center justify-end gap-4 border-t-2 border-l-2 border-[#767676] pr-3 pb-0.5">
        <svg width="24" height="24" viewBox="0 0 24 24">
          <rect x="8" y="2" width="14" height="14" fill="#3b8ee0" stroke="#345" strokeWidth="2" />
          <rect x="2" y="5" width="8" height="14" fill="#8db58d" stroke="#456" strokeWidth="2" />
          <path d="M2 22h20" stroke="#99a" strokeWidth="3" />
        </svg>
        <Huawei />
      </div>
    </div>
    <div className="absolute top-0 right-7 flex h-[34px] w-[78px] items-center gap-1 rounded-md bg-[#808080]/70 pl-1.5 text-[20px] text-white">
      <svg width="17" height="17" viewBox="0 0 17 17">
        <path d="M2 2h14L2 16z" fill="#fff" opacity="0.400" />
        <path d="M1 17V1h16" fill="none" stroke="#fff" strokeWidth="2" />
      </svg>
      时间
    </div>
    <span className="absolute right-3 bottom-0.5 text-[20px] leading-[34px] whitespace-nowrap text-[#8c8c8c]/80">CSDN @什么都不会...</span>
  </footer>
);

const App = () => {
  return (
    <div className="flex h-screen flex-col overflow-hidden bg-white font-['Noto_Sans','Noto_Sans_CJK_SC',sans-serif] text-black">
      <BrowserTabs />
      <AddressRow />
      <BookmarkRow />
      <AppHeader />
      <PageTabs />
      <div className="flex min-h-0 flex-1">
        <aside className="flex w-[452px] shrink-0 flex-col">
          <DevicePanel />
          <div className="h-[5px] shrink-0 bg-[#ecebe4]" />
          <FunctionPanel />
        </aside>
        <div className="mr-1 w-[5px] shrink-0 bg-[#ecebe4]" />
        <ClientPanel />
      </div>
      <StatusBar />
    </div>
  );
};

export default App;
